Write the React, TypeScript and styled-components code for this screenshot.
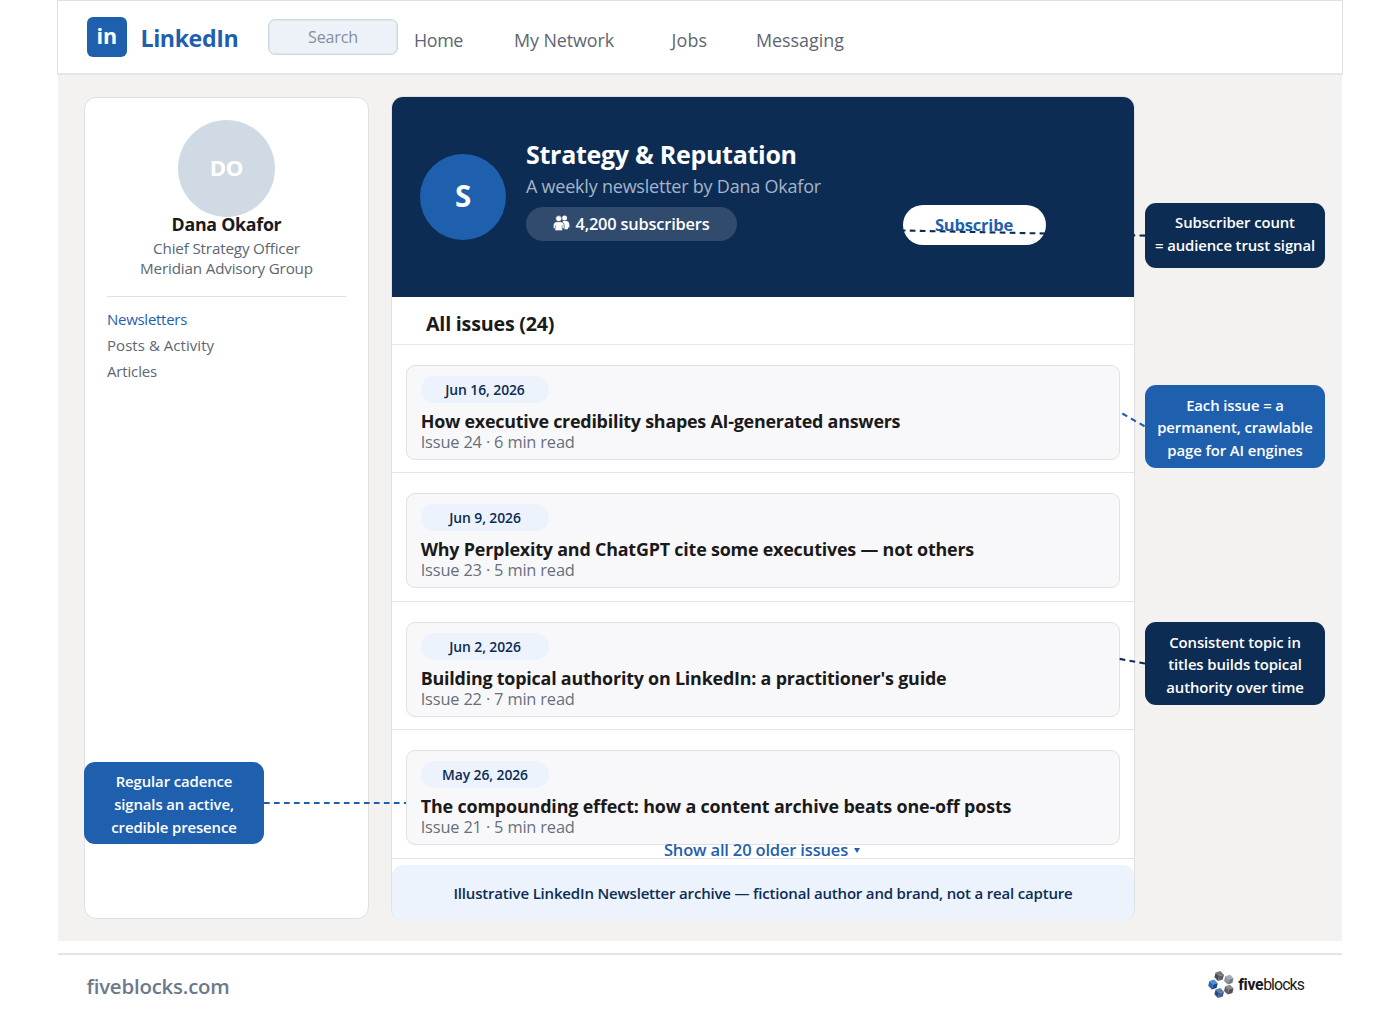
import React from "react";
import styled, { createGlobalStyle, css } from "styled-components";

const navy = "#0d2c54";
const blue = "#1f60ae";
const pale = "#ecf3fc";
const line = "#e0e1e3";
const ink = "#1a1a1a";
const muted = "#5d6672";

const GlobalStyle = createGlobalStyle`
  *, *::before, *::after { box-sizing: border-box; }
  body {
    margin: 0;
    background: #fff;
    font-family: "Open Sans", "Noto Sans", sans-serif;
    color: ${ink};
  }
`;

const Page = styled.div`
  position: relative;
  width: 1284px;
  height: 1027px;
  margin-left: 58px;
  display: flex;
  flex-direction: column;
  white-space: nowrap;
`;

/* ---------- top bar ---------- */

const TopBar = styled.header`
  display: flex;
  align-items: flex-start;
  height: 75px;
  margin: 0 -1px;
  padding-left: 28.5px;
  border: 1px solid ${line};
  border-bottom-width: 2px;
  border-bottom-color: #e4e5e7;
  background: #fff;
`;

const LogoTile = styled.div`
  display: flex;
  justify-content: center;
  width: 40.5px;
  height: 40px;
  margin-top: 16px;
  padding-top: 5px;
  border-radius: 6px;
  background: ${blue};
  color: #fff;
  font-size: 21.5px;
  font-weight: 700;
  line-height: 27px;
`;

const Brand = styled.div`
  width: 100px;
  margin: 22px 0 0 13.500px;
  color: ${blue};
  font-size: 23.2px;
  font-weight: 700;
  line-height: 30px;
  letter-spacing: -0.42px;
`;

const SearchBox = styled.div`
  display: flex;
  align-items: center;
  justify-content: center;
  width: 130px;
  height: 36px;
  margin: 18px 0 0 27.5px;
  border: 1.5px solid #cfd9e4;
  border-radius: 7px;
  background: #edf2f9;
  box-shadow: inset 0 0 0 0.5px #cfd9e4;
  color: #84909d;
  font-size: 16.1px;
  letter-spacing: -0.17px;
`;

const Nav = styled.nav`
  display: grid;
  grid-template-columns: 100px 157.500px 84.500px 100px;
  margin: 26px 0 0 16px;
`;

const NavLink = styled.span<{ $track: number }>`
  color: ${muted};
  font-size: 17.9px;
  line-height: 26px;
  letter-spacing: ${(p) => p.$track}px;
`;

/* ---------- body ---------- */

const Body = styled.main`
  display: flex;
  align-items: flex-start;
  height: 866px;
  padding-left: 26px;
  background: #f3f2f0;
`;

const Profile = styled.aside`
  display: flex;
  flex-direction: column;
  width: 285px;
  height: 822px;
  margin-top: 22px;
  padding: 22px 22px 0;
  border: 1px solid ${line};
  border-radius: 12px;
  background: #fff;
`;

const round = css`
  display: flex;
  align-items: center;
  justify-content: center;
  border-radius: 50%;
  color: #fff;
  font-weight: 700;
`;

const Avatar = styled.div`
  ${round}
  width: 97px;
  height: 97px;
  flex: none;
  align-self: center;
  padding-bottom: 3px;
  background: #d0dae4;
  font-size: 22.2px;
  letter-spacing: -0.4px;
`;

const Name = styled.div`
  margin-top: -3px;
  text-align: center;
  font-size: 17.8px;
  font-weight: 700;
  line-height: 20px;
  letter-spacing: -0.27px;
`;

const Role = styled.div`
  margin-top: 4px;
  text-align: center;
  color: ${muted};
  font-size: 15.2px;
  line-height: 20px;
  letter-spacing: -0.16px;
`;

const Divider = styled.div`
  height: 1px;
  flex: none;
  margin: 18px 0 10px;
  background: ${line};
`;

const SideLink = styled.div<{ $active?: boolean; $track: number }>`
  color: ${(p) => (p.$active ? blue : muted)};
  font-size: 15px;
  line-height: 25.8px;
  letter-spacing: ${(p) => p.$track}px;
`;

const Archive = styled.section`
  display: flex;
  flex-direction: column;
  width: 744px;
  height: 825px;
  margin: 21px 0 0 22px;
  border: 1px solid ${line};
  border-bottom: 0;
  border-radius: 12px;
  background: #fff;
  overflow: hidden;
`;

const Hero = styled.div`
  display: flex;
  align-items: flex-start;
  flex: none;
  height: 200px;
  padding: 0 88.500px 0 28px;
  background: ${navy};
`;

const Emblem = styled.div`
  ${round}
  width: 86px;
  height: 86px;
  margin-top: 57px;
  padding-bottom: 4px;
  background: ${blue};
  font-size: 29.500px;
`;

const HeroText = styled.div`
  margin: 40px 0 0 20px;
`;

const HeroTitle = styled.h1`
  margin: 0;
  color: #fff;
  font-size: 25px;
  font-weight: 700;
  line-height: 34px;
  letter-spacing: -0.28px;
`;

const HeroSub = styled.div`
  margin-top: 2px;
  color: #a3b5ca;
  font-size: 18px;
  line-height: 26px;
  letter-spacing: -0.22px;
`;

const CountPill = styled.div`
  display: flex;
  align-items: center;
  justify-content: center;
  gap: 5px;
  width: 211px;
  height: 34px;
  margin-top: 8px;
  padding-bottom: 2px;
  border-radius: 17px;
  background: #314b6e;
  color: #fff;
  font-size: 16.4px;
  font-weight: 600;
  letter-spacing: -0.19px;
`;

const SubscribeButton = styled.button`
  width: 143px;
  height: 40px;
  margin: 108px 0 0 auto;
  padding: 0 0 1px;
  border: 0;
  border-radius: 20px;
  background: #fff;
  color: ${blue};
  font: 700 16.5px "Open Sans", "Noto Sans", sans-serif;
  letter-spacing: -0.19px;
`;

const ListHeading = styled.h2`
  flex: none;
  height: 48px;
  margin: 0;
  padding: 12px 0 0 34px;
  border-bottom: 1px solid #ebebed;
  font-size: 19.7px;
  font-weight: 700;
  line-height: 30px;
  letter-spacing: -0.22px;
`;

const Row = styled.div`
  flex: none;
  height: 128.4px;
  padding: 20px 14px 0;
  border-bottom: 1px solid #e4e5e7;
`;

const IssueCard = styled.article`
  height: 95px;
  padding: 10px 14px 0;
  border: 1px solid ${line};
  border-radius: 9px;
  background: #f8f8fa;
`;

const DatePill = styled.div`
  width: 128px;
  height: 27px;
  border-radius: 14px;
  background: ${pale};
  color: ${navy};
  text-align: center;
  font-size: 13.9px;
  font-weight: 600;
  line-height: 27px;
  letter-spacing: -0.08px;
`;

const IssueTitle = styled.h3<{ $track: number }>`
  margin: 8px 0 0 -0.3px;
  font-size: 17.9px;
  font-weight: 700;
  line-height: 21px;
  letter-spacing: ${(p) => p.$track}px;
`;

const IssueMeta = styled.div`
  margin-left: -0.3px;
  color: #66707c;
  font-size: 16.4px;
  line-height: 20px;
  letter-spacing: -0.17px;
`;

const ShowMore = styled.div`
  display: flex;
  align-items: center;
  justify-content: center;
  gap: 6px;
  flex: none;
  height: 20px;
  margin: -19px 2px 0 0;
  color: ${blue};
  font-size: 16.5px;
  font-weight: 600;
  letter-spacing: -0.17px;
`;

const Caret = styled.span`
  margin-top: 2px;
  border: 3px solid transparent;
  border-top: 5px solid ${blue};
  border-bottom: 0;
`;

const Note = styled.div`
  flex: 1;
  margin-top: 5px;
  border-radius: 11px;
  background: ${pale};
  color: ${navy};
  text-align: center;
  font-size: 15px;
  font-weight: 600;
  line-height: 56px;
  letter-spacing: -0.18px;
`;

/* ---------- annotations ---------- */

const NoteColumn = styled.div`
  display: flex;
  flex-direction: column;
  width: 180px;
  margin: 128px 0 0 10px;
`;

const Callout = styled.div<{ $tone: string; $gap?: number; $short?: boolean }>`
  width: 180px;
  height: ${(p) => (p.$short ? 65 : 82.5)}px;
  margin-top: ${(p) => p.$gap ?? 0}px;
  padding-top: ${(p) => (p.$short ? 8 : 8.6)}px;
  border-radius: 11px;
  background: ${(p) => p.$tone};
  color: #fff;
  text-align: center;
  white-space: pre-line;
  font-size: 14.9px;
  font-weight: 600;
  line-height: 22.8px;
  letter-spacing: -0.11px;
`;

const FloatingCallout = styled(Callout)`
  position: absolute;
  left: 26px;
  top: 761.700px;
`;

const Connectors = styled.svg`
  position: absolute;
  inset: 0 auto auto -58px;
  pointer-events: none;
`;

/* ---------- footer ---------- */

const Footer = styled.footer`
  display: flex;
  justify-content: space-between;
  align-items: flex-start;
  margin-top: 12px;
  padding: 0 38px 0 28.500px;
  border-top: 2px solid #e1e6ec;
`;

const Site = styled.div`
  margin-top: 15px;
  color: #6b7a8a;
  font-size: 20.4px;
  font-weight: 600;
  line-height: 32px;
  letter-spacing: -0.2px;
`;

const FooterLogo = styled.div`
  display: flex;
  align-items: center;
  gap: 4px;
  margin-top: 15.500px;
  color: #17181c;
  font-family: Roboto, sans-serif;
  font-size: 15.8px;
  line-height: 28px;
  letter-spacing: -0.88px;
  b { letter-spacing: -0.35px; }
`;

const PeopleIcon = () => (
  <svg width="17" height="16" viewBox="0 0 17 16" fill="#fff">
    <circle cx="11.6" cy="3" r="2.5" />
    <path d="M9.6 6.1h3.6c2 0 3.2 1.6 3.2 3.8v2.7h-1.5v1.6h-4z" />
    <circle cx="5.7" cy="3.6" r="3" stroke="#314b6e" strokeWidth=".7" />
    <path
      d="M3.9 6.7h3.6c2.3 0 3.7 1.7 3.7 4v2.9H9.500v2.100H1.900v-2.100H.2v-2.900c0-2.300 1.400-4 3.700-4z"
      stroke="#314b6e"
      strokeWidth=".7"
    />
    <path d="M2.3 10.2v3.4M9.100 10.2v3.4" stroke="#314b6e" strokeWidth=".6" />
  </svg>
);

const blocks = [
  { x: 11.2, y: 5, top: "#77797d", left: "#4b4c50", right: "#5d5f63" },
  { x: 20.8, y: 8.6, top: "#a6abb3", left: "#8e949d", right: "#767c86" },
  { x: 5, y: 13.5, top: "#4d8ed2", left: "#2668b4", right: "#184b8c" },
  { x: 20.8, y: 18.6, top: "#8b8c8f", left: "#616266", right: "#505155" },
  { x: 11.2, y: 22, top: "#5f7ba6", left: "#2b4a7b", right: "#3960a0" },
];

const BlocksIcon = () => (
  <svg width="26" height="28" viewBox="0 0 26 28">
    {blocks.map((b) => (
      <g key={`${b.x}-${b.y}`} transform={`translate(${b.x} ${b.y}) rotate(14) scale(1.08)`}>
        <path d="M0-4.700 4-2.300 0 0-4-2.300z" fill={b.top} />
        <path d="M-4-2.300 0 0v4.700L-4 2.300z" fill={b.left} />
        <path d="M4-2.300 0 0v4.700L4 2.300z" fill={b.right} />
      </g>
    ))}
  </svg>
);

const nav = [
  { label: "Home", track: -0.4 },
  { label: "My Network", track: -0.1 },
  { label: "Jobs", track: 0.2 },
  { label: "Messaging", track: -0.02 },
];

const issues = [
  { date: "Jun 16, 2026", title: "How executive credibility shapes AI-generated answers", meta: "Issue 24 · 6 min read", track: -0.24 },
  { date: "Jun 9, 2026", title: "Why Perplexity and ChatGPT cite some executives — not others", meta: "Issue 23 · 5 min read", track: -0.2 },
  { date: "Jun 2, 2026", title: "Building topical authority on LinkedIn: a practitioner's guide", meta: "Issue 22 · 7 min read", track: -0.21 },
  { date: "May 26, 2026", title: "The compounding effect: how a content archive beats one-off posts", meta: "Issue 21 · 5 min read", track: -0.15 },
];

export default function App() {
  return (
    <>
      <GlobalStyle />
      <Page>
        <TopBar>
          <LogoTile>in</LogoTile>
          <Brand>LinkedIn</Brand>
          <SearchBox>Search</SearchBox>
          <Nav>
            {nav.map((n) => (
              <NavLink key={n.label} $track={n.track}>{n.label}</NavLink>
            ))}
          </Nav>
        </TopBar>

        <Body>
          <Profile>
            <Avatar>DO</Avatar>
            <Name>Dana Okafor</Name>
            <Role>
              Chief Strategy Officer
              <br />
              Meridian Advisory Group
            </Role>
            <Divider />
            <SideLink $active $track={-0.28}>Newsletters</SideLink>
            <SideLink $track={0.05}>Posts &amp; Activity</SideLink>
            <SideLink $track={-0.16}>Articles</SideLink>
          </Profile>

          <Archive>
            <Hero>
              <Emblem>S</Emblem>
              <HeroText>
                <HeroTitle>Strategy &amp; Reputation</HeroTitle>
                <HeroSub>A weekly newsletter by Dana Okafor</HeroSub>
                <CountPill>
                  <PeopleIcon />
                  4,200 subscribers
                </CountPill>
              </HeroText>
              <SubscribeButton>Subscribe</SubscribeButton>
            </Hero>
            <ListHeading>All issues (24)</ListHeading>
            {issues.map((i) => (
              <Row key={i.date}>
                <IssueCard>
                  <DatePill>{i.date}</DatePill>
                  <IssueTitle $track={i.track}>{i.title}</IssueTitle>
                  <IssueMeta>{i.meta}</IssueMeta>
                </IssueCard>
              </Row>
            ))}
            <ShowMore>
              Show all 20 older issues
              <Caret />
            </ShowMore>
            <Note>Illustrative LinkedIn Newsletter archive — fictional author and brand, not a real capture</Note>
          </Archive>

          <NoteColumn>
            <Callout $tone={navy} $short>{"Subscriber count\n= audience trust signal"}</Callout>
            <Callout $tone={blue} $gap={117}>{"Each issue = a\npermanent, crawlable\npage for AI engines"}</Callout>
            <Callout $tone={navy} $gap={154.5}>{"Consistent topic in\ntitles builds topical\nauthority over time"}</Callout>
          </NoteColumn>
        </Body>

        <Footer>
          <Site>fiveblocks.com</Site>
          <FooterLogo>
            <BlocksIcon />
            <span><b>five</b>blocks</span>
          </FooterLogo>
        </Footer>

        <Connectors width="1400" height="1027" fill="none" strokeWidth="2.1" strokeDasharray="5.7 4.29">
          <path d="M740 227.1 1145 235.6" stroke={navy} />
          <path d="M1122.3 413.5 1145 426.5" stroke={blue} />
          <path d="M1119.7 658.9 1145 663.6" stroke={navy} />
          <path d="M264 803H406" stroke={blue} />
        </Connectors>
        <FloatingCallout $tone={blue}>{"Regular cadence\nsignals an active,\ncredible presence"}</FloatingCallout>
      </Page>
    </>
  );
}
